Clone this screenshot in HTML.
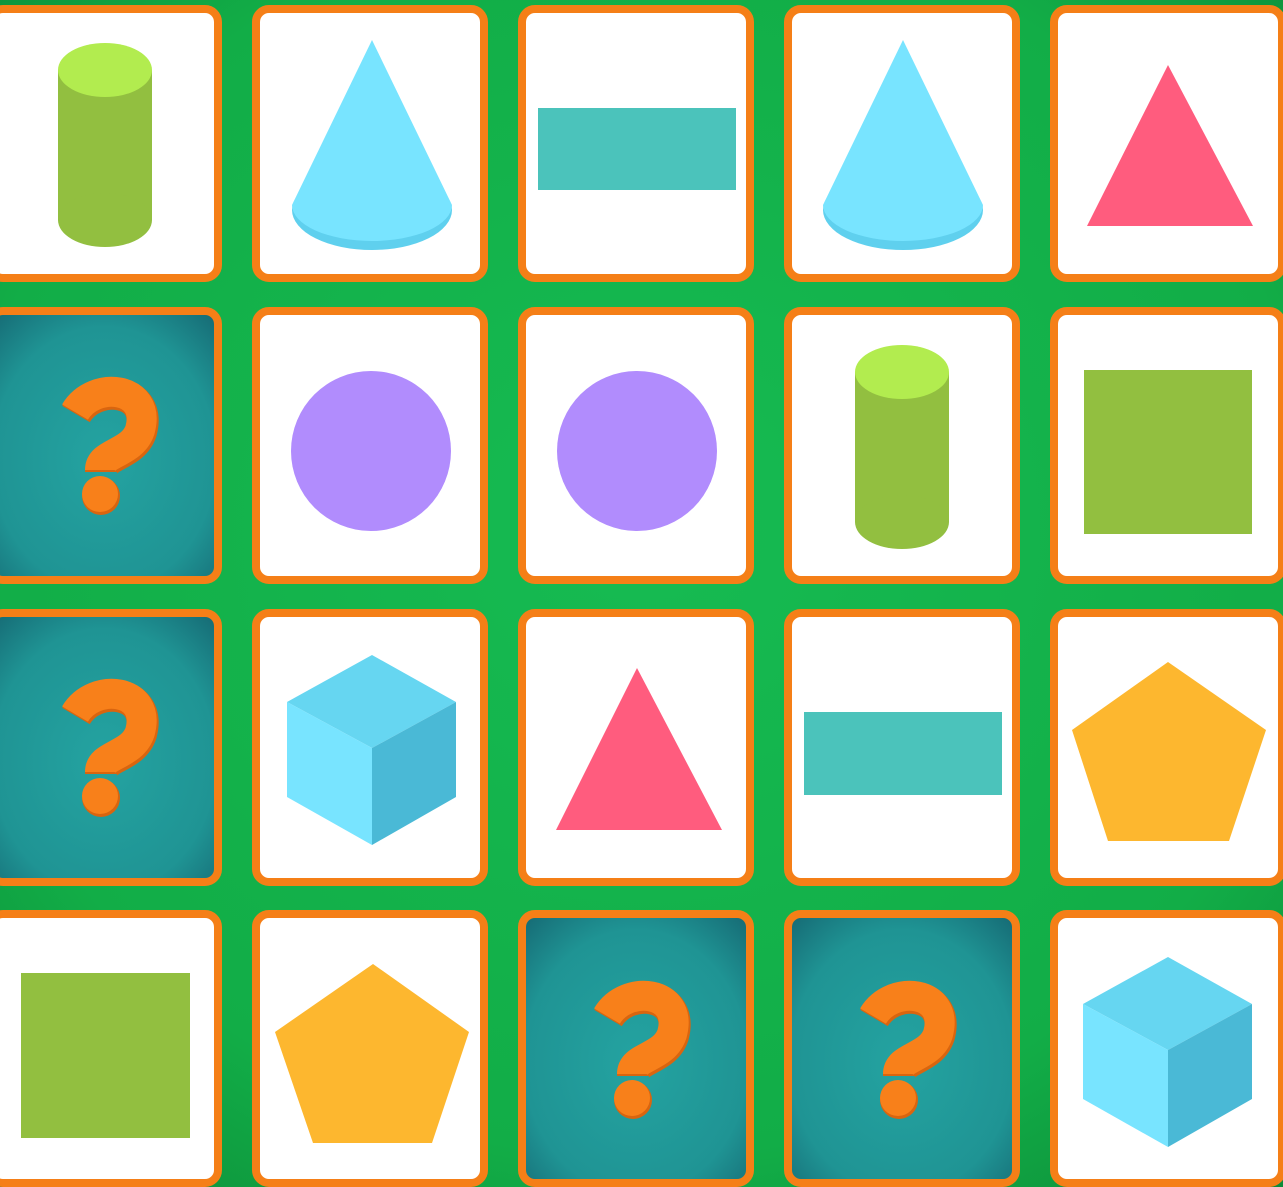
<!DOCTYPE html>
<html><head><meta charset="utf-8"><style>
html,body{margin:0;padding:0;width:1283px;height:1187px;overflow:hidden;background:#12b04a}
svg{display:block}
</style></head><body>
<svg width="1283" height="1187" viewBox="0 0 1283 1187" xmlns="http://www.w3.org/2000/svg">
<defs>
<radialGradient id="bg" cx="50%" cy="45%" r="75%">
<stop offset="0" stop-color="#16bb52"/><stop offset="0.7" stop-color="#12ad47"/><stop offset="1" stop-color="#0c8a38"/>
</radialGradient>
<radialGradient id="back" cx="50%" cy="55%" r="70%">
<stop offset="0" stop-color="#24a3a1"/><stop offset="0.7" stop-color="#1f9494"/><stop offset="1" stop-color="#176f78"/>
</radialGradient>
<g id="card"><rect x="4" y="4" width="228" height="269" rx="13" fill="#fff" stroke="#f57f17" stroke-width="8"/></g>
<g id="cardb"><rect x="4" y="4" width="228" height="269" rx="13" fill="url(#back)" stroke="#f57f17" stroke-width="8"/></g>
<g id="cyl">
<rect x="-47" y="0" width="94" height="150" fill="#92bf40"/>
<ellipse cx="0" cy="150" rx="47" ry="27" fill="#92bf40"/>
<ellipse cx="0" cy="0" rx="47" ry="27" fill="#b2ec4f"/>
</g>
<g id="cone">
<ellipse cx="0" cy="170" rx="80" ry="40" fill="#5fd0ee"/>
<path d="M0 0 L-80 165 A80 36 0 0 0 80 165 Z" fill="#78e4ff"/>
</g>
<g id="cube">
<path d="M0 0 L84 47 L0 93 L-85 47 Z" fill="#66d6f1"/>
<path d="M-85 47 L0 93 L0 190 L-85 142 Z" fill="#78e4ff"/>
<path d="M84 47 L0 93 L0 190 L84 142 Z" fill="#4ab9d6"/>
</g>
<g id="q">
<path d="M-31 30 C -12 -2, 46 4, 34 48 C 26 72, -6 70, -6 88" fill="none" stroke="#d9650f" stroke-width="32" transform="translate(1,2)"/>
<circle cx="-5" cy="114" r="19" fill="#d9650f"/>
<path d="M-31 30 C -12 -2, 46 4, 34 48 C 26 72, -6 70, -6 88" fill="none" stroke="#f8801a" stroke-width="30"/>
<circle cx="-6" cy="112" r="18" fill="#f8801a"/>
</g>
<g id="card_q_dummy"></g>
</defs>
<rect width="1283" height="1187" fill="url(#bg)"/>
<use href="#card" x="-14" y="5"/><use href="#card" x="252" y="5"/><use href="#card" x="518" y="5"/><use href="#card" x="784" y="5"/><use href="#card" x="1050" y="5"/>
<use href="#cardb" x="-14" y="307"/><use href="#card" x="252" y="307"/><use href="#card" x="518" y="307"/><use href="#card" x="784" y="307"/><use href="#card" x="1050" y="307"/>
<use href="#cardb" x="-14" y="609"/><use href="#card" x="252" y="609"/><use href="#card" x="518" y="609"/><use href="#card" x="784" y="609"/><use href="#card" x="1050" y="609"/>
<use href="#card" x="-14" y="910"/><use href="#card" x="252" y="910"/><use href="#cardb" x="518" y="910"/><use href="#cardb" x="784" y="910"/><use href="#card" x="1050" y="910"/>

<use href="#cyl" x="105" y="70"/>
<use href="#cone" x="372" y="40"/>
<rect x="538" y="108" width="198" height="82" fill="#4bc3bb"/>
<use href="#cone" x="903" y="40"/>
<path d="M1168 65 L1253 226 L1087 226 Z" fill="#ff5c7e"/>

<use href="#q" x="106" y="382"/>
<circle cx="371" cy="451" r="80" fill="#b18cfd"/>
<circle cx="637" cy="451" r="80" fill="#b18cfd"/>
<use href="#cyl" x="902" y="372"/>
<rect x="1084" y="370" width="168" height="164" fill="#92bf40"/>

<use href="#q" x="106" y="684"/>
<use href="#cube" x="372" y="655"/>
<path d="M637 668 L722 830 L556 830 Z" fill="#ff5c7e"/>
<rect x="804" y="712" width="198" height="83" fill="#4bc3bb"/>
<path d="M1168 662 L1266 730 L1229 841 L1108 841 L1072 730 Z" fill="#fdb72f"/>

<rect x="21" y="973" width="169" height="165" fill="#92bf40"/>
<path d="M373 964 L469 1032 L432 1143 L313 1143 L275 1032 Z" fill="#fdb72f"/>
<use href="#q" x="638" y="986"/>
<use href="#q" x="904" y="986"/>
<use href="#cube" x="1168" y="957"/>
</svg>
</body></html>
